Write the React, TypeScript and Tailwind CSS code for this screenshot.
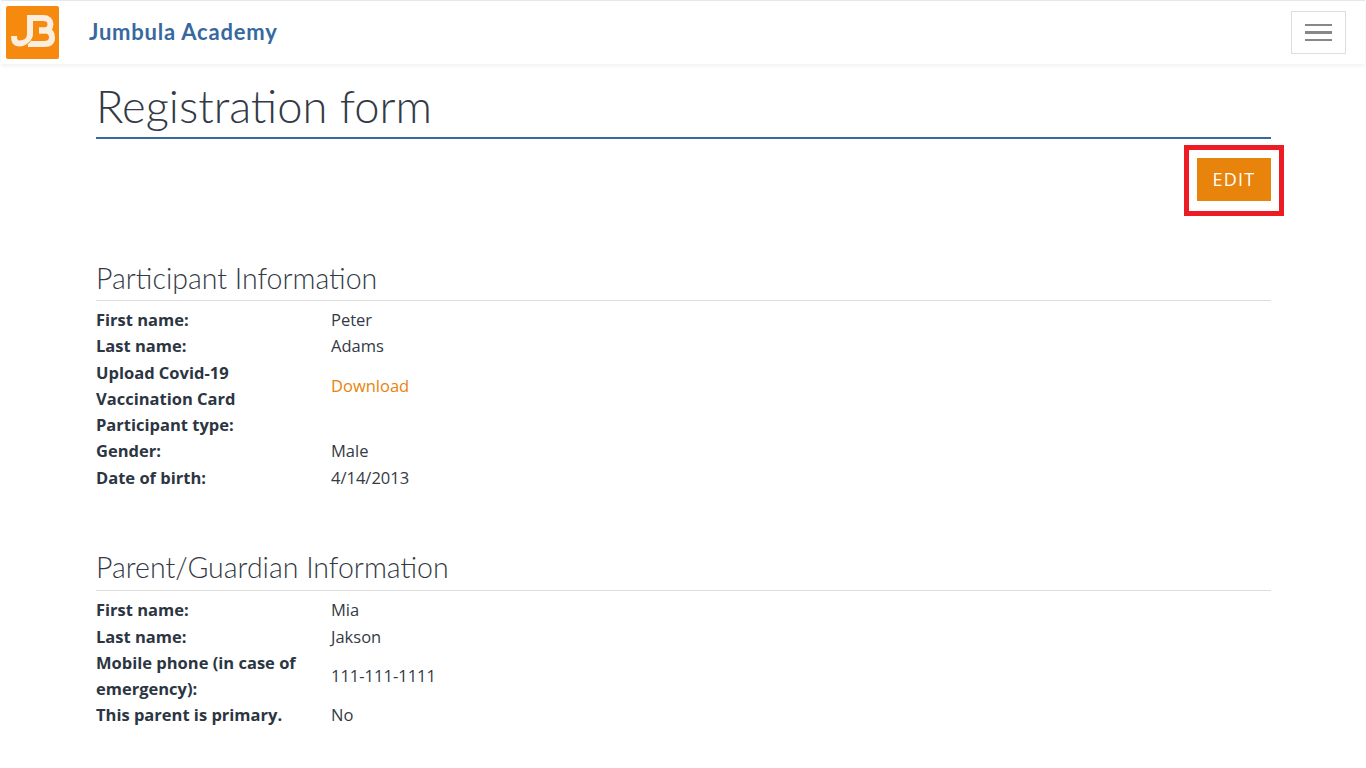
const participant = [
  { label: "First name:", value: "Peter" },
  { label: "Last name:", value: "Adams" },
  { label: "Upload Covid-19 Vaccination Card", value: "Download", link: true },
  { label: "Participant type:", value: "" },
  { label: "Gender:", value: "Male" },
  { label: "Date of birth:", value: "4/14/2013" },
];

const parent = [
  { label: "First name:", value: "Mia" },
  { label: "Last name:", value: "Jakson" },
  { label: "Mobile phone (in case of emergency):", value: "111-111-1111" },
  { label: "This parent is primary.", value: "No" },
];

type Row = { label: string; value: string; link?: boolean };

function Section({ title, rows, pad }: { title: string; rows: Row[]; pad: string }) {
  return (
    <section>
      <h2 className={"font-['Lato'] font-light text-[28.5px] leading-[34px] text-[#333a45] border-b border-[#dddddd] mb-[6px] " + pad}>
        {title}
      </h2>
      {rows.map((row) => (
        <div key={row.label} className="flex items-center text-[16.5px] leading-[26.25px]">
          <div className="w-[235px] pr-[25px] font-bold text-[#2c3542]">{row.label}</div>
          {row.link ? (
            <a className="text-[#e8830c]">{row.value}</a>
          ) : (
            <div className="text-[#333a45]">{row.value}</div>
          )}
        </div>
      ))}
    </section>
  );
}

function App() {
  return (
    <div className="min-h-[768px] bg-white font-['Open_Sans','Noto_Sans',sans-serif]">
      <nav className="h-[64px] mx-[1px] flex items-center justify-between border-t border-[#e7e7e7] pl-[5px] pr-[19px] shadow-[0_2px_4px_rgba(0,0,0,0.06)]">
        <div className="flex items-center gap-[30px]">
          <svg width="53" height="53" viewBox="0 0 53 53" className="rounded-[2px]">
            <rect width="53" height="53" fill="#f58a0e" />
            <g fill="none" stroke="#fbeede" strokeWidth="6">
              <path d="M24 9V28C24 35 19 37.5 13 37.5C9.5 37.5 8 35 8 30" />
              <path d="M24 12H37C42 12 44.5 14.5 44.5 18C44.5 22 42 24.5 38 24.5H33" />
              <path d="M33 24.5H39C44 24.5 46 27 46 31.5C46 36 43 38 38 38H22" />
            </g>
            <path d="M16 41C21 39 25 36 27 31" fill="none" stroke="#f58a0e" strokeWidth="1" />
          </svg>
          <span className="-mt-[2px] font-['Lato'] font-bold text-[22px] tracking-[0.78px] text-[#37699f]">Jumbula Academy</span>
        </div>
        <button className="w-[55px] h-[43px] border border-[#dddddd] flex flex-col items-center justify-center gap-[5px]">
          <span className="block w-[27px] h-[2px] bg-[#888888]" />
          <span className="block w-[27px] h-[3px] bg-[#888888]" />
          <span className="block w-[27px] h-[2px] bg-[#888888]" />
        </button>
      </nav>

      <main className="ml-[96px] w-[1175px]">
        <h1 className="mt-[13px] font-['Lato'] font-light text-[45.3px] leading-[58px] text-[#333a45] border-b-2 border-[#37699f] pb-[2px]">
          Registration form
        </h1>
        <div className="flex justify-end mt-[19px]">
          <div className="relative">
            <button className="w-[74px] h-[43px] bg-[#e8830c] text-white text-[18px] tracking-[1.2px]">EDIT</button>
            <div className="absolute -left-[13px] -top-[13px] w-[100px] h-[71px] border-[5px] border-[#ed1c24]" />
          </div>
        </div>
        <div className="mt-[60px]">
          <Section title="Participant Information" rows={participant} pad="pb-[5px]" />
        </div>
        <div className="mt-[59.6px]">
          <Section title="Parent/Guardian Information" rows={parent} pad="pb-[6px]" />
        </div>
      </main>
    </div>
  );
}

export default App;
